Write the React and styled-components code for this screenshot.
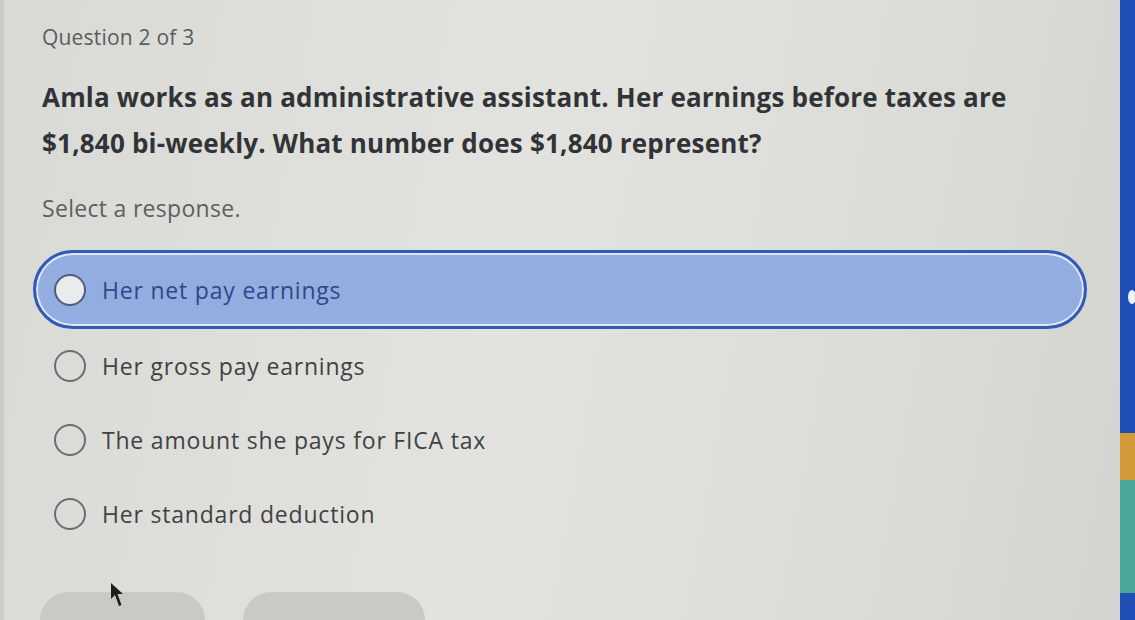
import React from 'react';
import styled, { createGlobalStyle } from 'styled-components';

const GlobalStyle = createGlobalStyle`
  html, body { margin: 0; padding: 0; }
  body { font-family: "Open Sans", "Liberation Sans", sans-serif; background: #d6d7d3; }
`;

const options = [
  'Her net pay earnings',
  'Her gross pay earnings',
  'The amount she pays for FICA tax',
  'Her standard deduction',
];

const Screen = styled.div`
  width: 1135px;
  height: 620px;
  display: flex;
  overflow: hidden;
`;

const Panel = styled.main`
  flex: 1;
  display: flex;
  flex-direction: column;
  padding: 24px 0 0 38px;
  background: linear-gradient(100deg, #d9dad6 0%, #e2e3df 45%, #dcddd9 75%, #d3d4d0 100%);
  border-left: 4px solid #cbccc8;
`;

const Counter = styled.div`
  font-size: 21px;
  line-height: 26px;
  color: #5a5c5d;
  letter-spacing: 0.2px;
`;

const Prompt = styled.h1`
  margin: 24px 0 0;
  font-size: 26px;
  font-weight: 700;
  line-height: 46px;
  color: #313437;
  letter-spacing: 0.2px;
  white-space: nowrap;
`;

const Hint = styled.div`
  margin-top: 27px;
  font-size: 23px;
  line-height: 30px;
  letter-spacing: 0.3px;
  color: #5d5f60;
`;

const List = styled.div`
  margin: 27px 0 0 -9px;
  display: flex;
  flex-direction: column;
  width: 1054px;
`;

const Option = styled.div`
  height: ${p => (p.$selected ? '79px' : '74px')};
  display: flex;
  align-items: center;
  gap: 16px;
  padding-left: 18px;
  box-sizing: border-box;
  border-radius: 40px;
  background: ${p => (p.$selected ? '#93ade0' : 'transparent')};
  border: ${p => (p.$selected ? '3px solid #2e5cb8' : '3px solid transparent')};
  box-shadow: ${p => (p.$selected ? 'inset 0 0 0 2px #dfe7f6' : 'none')};
`;

const Radio = styled.span`
  width: 32px;
  height: 32px;
  border-radius: 50%;
  box-sizing: border-box;
  border: 2px solid ${p => (p.$selected ? '#4e5d7a' : '#6b6d6e')};
  background: ${p => (p.$selected ? '#e9ebec' : 'transparent')};
  flex: none;
`;

const Label = styled.span`
  font-size: 23px;
  letter-spacing: 0.8px;
  color: ${p => (p.$selected ? '#2c4a8b' : '#3f4244')};
`;

const Footer = styled.div`
  margin-top: auto;
  display: flex;
  gap: 38px;
  margin-left: -2px;
  position: relative;
`;

const FooterButton = styled.div`
  width: ${p => p.$w}px;
  height: 28px;
  border-radius: 30px 30px 0 0;
  background: #c9cac5;
`;

const Cursor = styled.svg`
  position: absolute;
  left: 70px;
  top: -10px;
`;

const SideBar = styled.aside`
  width: 15px;
  display: flex;
  flex-direction: column;
  background: #1f4fb6;
  position: relative;
`;

const Band = styled.div`
  height: ${p => p.$h}px;
  background: ${p => p.$c};
  flex: none;
`;

const Dot = styled.span`
  position: absolute;
  left: 8px;
  top: 290px;
  width: 8px;
  height: 14px;
  border-radius: 50%;
  background: #eef2f8;
`;

export default function App() {
  return (
    <>
      <GlobalStyle />
      <Screen>
        <Panel>
          <Counter>Question 2 of 3</Counter>
          <Prompt>
            Amla works as an administrative assistant. Her earnings before taxes are
            <br />
            $1,840 bi-weekly. What number does $1,840 represent?
          </Prompt>
          <Hint>Select a response.</Hint>
          <List>
            {options.map((o, i) => (
              <Option key={o} $selected={i === 0}>
                <Radio $selected={i === 0} />
                <Label $selected={i === 0}>{o}</Label>
              </Option>
            ))}
          </List>
          <Footer>
            <FooterButton $w={165} />
            <FooterButton $w={182} />
            <Cursor width="16" height="26" viewBox="0 0 16 26">
              <path d="M1 1 L1 17 L5 13 L9 24 L11.5 23 L7.5 12 L13 12 Z" fill="#1c1e22" />
            </Cursor>
          </Footer>
        </Panel>
        <SideBar>
          <Band $h={433} $c="#1f4fb6" />
          <Band $h={47} $c="#d49a3a" />
          <Band $h={113} $c="#4aa89a" />
          <Band $h={27} $c="#1f4fb6" />
          <Dot />
        </SideBar>
      </Screen>
    </>
  );
}
